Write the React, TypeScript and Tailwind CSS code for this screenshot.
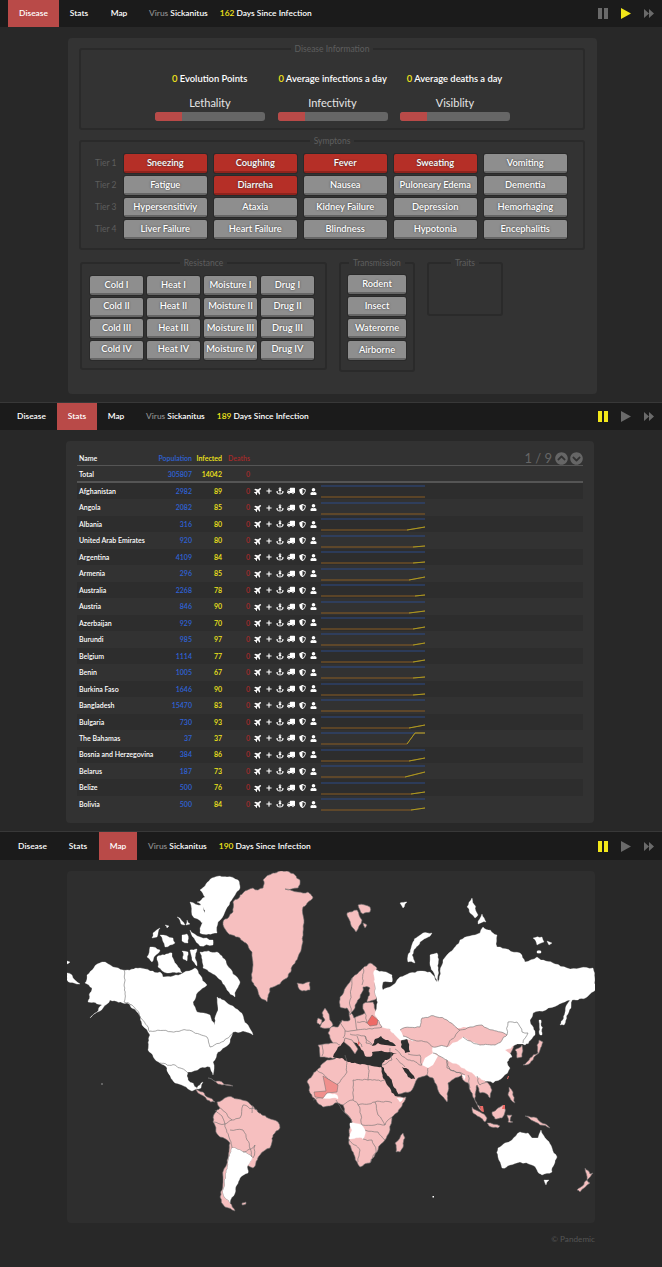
import React from "react";
import { FaPlane, FaPlus, FaAnchor, FaTruck, FaShieldAlt, FaUser, FaChevronCircleUp, FaChevronCircleDown } from "react-icons/fa";

const font = { fontFamily: 'Lato,"Open Sans",sans-serif' };

function Controls({ active }: { active: "pause" | "play" }) {
  const pc = active === "pause" ? "#f2e71a" : "#6a6a6a";
  const py = active === "play" ? "#f2e71a" : "#6a6a6a";
  return (
    <div className="flex items-center gap-[13px] pr-[8px]">
      <svg width="10" height="11" viewBox="0 0 10 11"><rect x="0" width="4" height="11" fill={pc} /><rect x="6" width="4" height="11" fill={pc} /></svg>
      <svg width="10" height="11" viewBox="0 0 10 11"><path d="M0 0L10 5.5L0 11Z" fill={py} /></svg>
      <svg width="10" height="9" viewBox="0 0 10 9"><path d="M0 0L5 4.5L0 9ZM5 0L10 4.5L5 9Z" fill="#6a6a6a" /></svg>
    </div>
  );
}

function Nav({ tab, days, active, h, tabs, gap }: { tab: string; days: number; active: "pause" | "play"; h: string; tabs: { name: string; cls: string }[]; gap: string }) {
  return (
    <div className={`flex items-center bg-[#1b1b1b] text-[8.4px] font-semibold text-white ${h}`}>
      {tabs.map((t) => (
        <div key={t.name} className={`flex h-full items-center justify-center ${t.cls} ${t.name === tab ? "bg-[#b94a48]" : ""}`}>{t.name}</div>
      ))}
      <div className={gap}><span className="text-[#8a8a8a]">Virus</span> Sickanitus</div>
      <div className="ml-[12px]"><span className="text-[#f2e71a]">{days}</span> Days Since Infection</div>
      <div className="ml-auto"><Controls active={active} /></div>
    </div>
  );
}

function Btn({ children, red }: { children: React.ReactNode; red?: boolean }) {
  return (
    <div
      className={`flex h-[19px] items-center justify-center whitespace-nowrap rounded-[2px] text-[9.3px] font-semibold text-white [text-shadow:0_0_2px_#333] shadow-[0_0_0_1px_#2a2a2a] border-b-2 ${
        red ? "bg-[#b52f27] border-b-[#8f231d]" : "bg-[#8e8e8e] border-b-[#666666]"
      }`}
    >
      {children}
    </div>
  );
}

function Field({ title, cls, children }: { title: string; cls: string; children?: React.ReactNode }) {
  return (
    <fieldset className={`rounded-[3px] border-2 border-[#2a2a2a] ${cls}`}>
      <legend className="mx-auto px-[4px] text-[8.5px] leading-[10px] text-[#5e5e5e]">{title}</legend>
      {children}
    </fieldset>
  );
}

const symptoms = [
  ["Tier 1", ["Sneezing", 1], ["Coughing", 1], ["Fever", 1], ["Sweating", 1], ["Vomiting", 0]],
  ["Tier 2", ["Fatigue", 0], ["Diarreha", 1], ["Nausea", 0], ["Puloneary Edema", 0], ["Dementia", 0]],
  ["Tier 3", ["Hypersensitiviy", 0], ["Ataxia", 0], ["Kidney Failure", 0], ["Depression", 0], ["Hemorhaging", 0]],
  ["Tier 4", ["Liver Failure", 0], ["Heart Failure", 0], ["Blindness", 0], ["Hypotonia", 0], ["Encephalitis", 0]],
] as const;

const resist = ["I", "II", "III", "IV"].flatMap((n) => ["Cold", "Heat", "Moisture", "Drug"].map((k) => `${k} ${n}`));

function Bar({ label }: { label: string }) {
  return (
    <div className="flex w-[110px] flex-col items-center">
      <div className="text-[11px] leading-[14px] text-[#e6e6e6]">{label}</div>
      <div className="mt-[2px] h-[9px] w-full overflow-hidden rounded-[3px] bg-[#666666]">
        <div className="h-full w-[27px] bg-[#b94a48]" />
      </div>
    </div>
  );
}

function Disease() {
  return (
    <section className="h-[403px] border-b border-[#383838]">
      <Nav tab="Disease" days={162} active="play" h="h-[27px]" gap="ml-[15px]" tabs={[
        { name: "Disease", cls: "ml-[8px] w-[51px]" },
        { name: "Stats", cls: "ml-[4px] w-[32px]" },
        { name: "Map", cls: "ml-[9px] w-[30px]" },
      ]} />
      <div className="ml-[68px] mt-[11px] h-[356px] w-[529px] rounded-[4px] bg-[#333333] pl-[11px] pr-[12px] pt-[6px]">
        <Field title="Disease Information" cls="h-[86px]">
          <div className="relative mt-[18px] flex h-[14px] text-[9.4px] font-semibold leading-[14px] text-white">
            <div className="ml-[91px]"><span className="text-[#f2e71a]">0</span> Evolution Points</div>
            <div className="ml-[31px]"><span className="text-[#f2e71a]">0</span> Average infections a day</div>
            <div className="ml-[20px]"><span className="text-[#f2e71a]">0</span> Average deaths a day</div>
          </div>
          <div className="ml-[74px] mt-[10px] flex gap-[12.5px]">
            <Bar label="Lethality" /><Bar label="Infectivity" /><Bar label="Visiblity" />
          </div>
        </Field>
        <Field title="Symptons" cls="mt-[6px] h-[114px]">
          <div className="grid grid-cols-[35.5px_repeat(5,82.5px)] gap-x-[7.5px] gap-y-[3px] pt-[8px]">
            {symptoms.map((row) => (
              <React.Fragment key={row[0]}>
                <div className="flex items-center justify-end text-[8.5px] text-[#5e5e5e]">{row[0]}</div>
                {row.slice(1).map((c: any) => <Btn key={c[0]} red={!!c[1]}>{c[0]}</Btn>)}
              </React.Fragment>
            ))}
          </div>
        </Field>
        <div className="ml-[1px] mt-[8px] flex items-start gap-[12px]">
          <Field title="Resistance" cls="h-[112px] w-[247px]">
            <div className="grid grid-cols-[repeat(4,53px)] gap-x-[4px] gap-y-[2.5px] pl-[8px] pt-[8px]">
              {resist.map((r) => <Btn key={r}>{r}</Btn>)}
            </div>
          </Field>
          <Field title="Transmission" cls="h-[114px] w-[76px]">
            <div className="flex flex-col gap-[3px] pl-[7px] pr-[7px] pt-[7px]">
              {["Rodent", "Insect", "Waterorne", "Airborne"].map((r) => <Btn key={r}>{r}</Btn>)}
            </div>
          </Field>
          <Field title="Traits" cls="h-[58px] w-[76px]" />
        </div>
      </div>
    </section>
  );
}

const rows: [string, number, number, number, number][] = [
  ["Afghanistan", 2982, 89, 0, 0], ["Angola", 2082, 85, 0, 0], ["Albania", 316, 80, 86, 3],
  ["United Arab Emirates", 920, 80, 92, 1], ["Argentina", 4109, 84, 92, 1], ["Armenia", 296, 85, 88, 3],
  ["Australia", 2268, 78, 94, 1], ["Austria", 846, 90, 88, 2], ["Azerbaijan", 929, 70, 92, 2],
  ["Burundi", 985, 97, 92, 2], ["Belgium", 1114, 77, 92, 2], ["Benin", 1005, 67, 92, 1],
  ["Burkina Faso", 1646, 90, 92, 1], ["Bangladesh", 15470, 83, 0, 0], ["Bulgaria", 730, 93, 88, 3],
  ["The Bahamas", 37, 37, 84, 11], ["Bosnia and Herzegovina", 384, 86, 88, 3], ["Belarus", 187, 73, 84, 5],
  ["Belize", 500, 76, 90, 2], ["Bolivia", 500, 84, 90, 2],
];

function Spark({ s, r }: { s: number; r: number }) {
  const y = 14 - r;
  const pts = r === 0 ? "0,14 104,14" : r === 11 ? "0,14 86,14 94,3 104,3" : `0,14 ${s},14 104,${y}`;
  return (
    <svg width="104" height="16" viewBox="0 0 104 16" className="block">
      <line x1="0" y1="3" x2="104" y2="3" stroke="#2c4a86" strokeWidth="1" />
      <polyline points={pts} fill="none" stroke="#8a5d22" strokeWidth="1" />
      {r > 0 && <polyline points={r === 11 ? "86,14 94,3 104,3" : `${s},14 104,${y}`} fill="none" stroke="#a89a22" strokeWidth="1" />}
    </svg>
  );
}

const gridCls = "grid grid-cols-[81px_34px_30px_28px_71px_1fr] items-center text-[7px] font-semibold";

function Stats() {
  return (
    <section className="h-[429px] border-b border-[#383838]">
      <Nav tab="Stats" days={189} active="pause" h="h-[27px]" gap="ml-[22px]" tabs={[
        { name: "Disease", cls: "ml-[17px] w-[29px]" },
        { name: "Stats", cls: "ml-[11px] w-[40px]" },
        { name: "Map", cls: "ml-[11px] w-[16px]" },
      ]} />
      <div className="ml-[66px] mt-[11px] h-[382px] w-[528px] rounded-[4px] bg-[#323232] pl-[11px] pr-[11px] pt-[9px]">
        <div className={`${gridCls} h-[16px] border-b border-[#555555] pt-[2px]`}>
          <div className="pl-[2px] text-white">Name</div>
          <div className="whitespace-nowrap text-right text-[#2f62d6]">Population</div>
          <div className="text-right text-[#f2e71a]">Infected</div>
          <div className="text-right text-[#a52a2a]">Deaths</div>
          <div />
          <div className="flex items-center justify-end gap-[2px] text-[13px] font-normal leading-none text-[#666666]">
            <span className="mr-[1px]">1 / 9</span>
            <FaChevronCircleUp size={13} />
            <FaChevronCircleDown size={13} />
          </div>
        </div>
        <div className={`${gridCls} h-[17px] border-b-2 border-[#555555] pt-[2px]`}>
          <div className="pl-[2px] text-white">Total</div>
          <div className="text-right text-[#2f62d6]">305807</div>
          <div className="text-right text-[#f2e71a]">14042</div>
          <div className="text-right text-[#a52a2a]">0</div>
        </div>
        {rows.map((r, i) => (
          <div key={r[0]} className={`${gridCls} h-[16.47px] ${i % 2 === 0 ? "bg-[#2d2d2d]" : ""}`}>
            <div className="whitespace-nowrap pl-[2px] text-white">{r[0]}</div>
            <div className="text-right text-[#2f62d6]">{r[1]}</div>
            <div className="text-right text-[#f2e71a]">{r[2]}</div>
            <div className="text-right text-[#a52a2a]">0</div>
            <div className="flex items-center justify-between pl-[4px] pr-[4px] text-white">
              <FaPlane size={8} className="-rotate-45" />
              <FaPlus size={6} />
              <FaAnchor size={8} />
              <FaTruck size={8} className="-scale-x-100" />
              <FaShieldAlt size={7} />
              <FaUser size={7} />
            </div>
            <Spark s={r[3]} r={r[4]} />
          </div>
        ))}
      </div>
    </section>
  );
}

const PINK = "#f6bfbf";
const LINE = "#6e6e6e";
const SEA = "#2e2e2e";

type P = [number, number];
const parse = (s: string): P[] => s.split(" ").map((t) => t.split(",").map(Number) as P);
const hash = (x: number, y: number) => {
  const v = Math.sin(x * 12.9898 + y * 78.233) * 43758.5453;
  return v - Math.floor(v) - 0.5;
};
function split(a: P, b: P, out: P[]) {
  const dx = b[0] - a[0];
  const dy = b[1] - a[1];
  const len = Math.hypot(dx, dy);
  if (len < 3.5) return;
  const mx = (a[0] + b[0]) / 2;
  const my = (a[1] + b[1]) / 2;
  const flip = dx > 0 || (dx === 0 && dy > 0) ? 1 : -1;
  const d = hash(mx, my) * Math.min(len * 0.3, 2.4);
  const m: P = [mx + (-dy / len) * d * flip, my + (dx / len) * d * flip];
  split(a, m, out);
  out.push(m);
  split(m, b, out);
}
function rough(s: string, closed = true) {
  const pts = parse(s);
  const out: P[] = [];
  pts.forEach((p, i) => {
    out.push(p);
    const n = pts[i + 1] ?? (closed ? pts[0] : null);
    if (n) split(p, n, out);
  });
  return out.map((p) => `${p[0].toFixed(1)},${p[1].toFixed(1)}`).join(" ");
}

const pinkShapes = [
  "318,1045 324,1044 333,1043 330,1038 328,1033 330,1028 338,1027 342,1020 346,1021 350,1020 349,1012 354,1018 365,1013 363,1004 373,1002 377,1013 385,1027 390,1029 396,1035 400,1030 520,1030 505,1065 493,1078 483,1078 488,1083 492,1090 490,1098 485,1093 480,1093 477,1085 475,1100 483,1112 477,1104 470,1090 468,1083 463,1080 462,1075 455,1078 448,1083 447,1094 447,1102 442,1096 437,1086 433,1078 427,1075 418,1078 412,1090 403,1093 395,1095 406,1097 402,1106 398,1112 392,1117 390,1130 387,1136 385,1140 381,1144 378,1150 374,1157 370,1163 360,1167 357,1162 355,1157 351,1148 349,1140 349,1130 352,1122 345,1113 343,1105 335,1103 330,1106 323,1107 316,1100 310,1093 307,1082 312,1076 317,1070 322,1064 327,1060 337,1057 320,1057",
  "370,963 377,968 375,985 377,998 367,1002 370,988 363,987 360,998 355,1008 350,1015 347,1008 340,1007 340,997 346,987 352,978 363,968",
  "325,1008 329,1014 333,1025 330,1028 320,1027 325,1020 322,1013",
  "318,1018 322,1020 320,1025 317,1023",
  "297,983 303,984 310,982 310,987 310,990 302,991 298,987",
  "347,913 357,910 362,920 356,932 352,927",
  "358,905 365,905 370,907 370,912 363,914",
  "363,923 367,925 365,928",
  "273,873 280,871 287,871 295,875 300,880 298,888 285,889 298,892 308,892 313,897 303,907 304,920 303,932 302,945 298,957 293,965 287,978 280,984 270,988 267,1002 260,997 254,985 252,978 253,965 252,952 246,943 240,938 232,935 227,932 223,922 233,912 233,902 243,893 253,888 258,890 263,888 263,880",
  "472,1107 480,1112 487,1118 485,1122 473,1113",
  "487,1123 500,1126 498,1128 489,1126",
  "492,1112 498,1108 503,1105 505,1112 502,1118 495,1119",
  "507,1115 512,1115 510,1121 513,1122 508,1122",
  "509,1087 513,1092 515,1103 511,1100 508,1095",
  "525,1116 537,1118 550,1128 540,1125 531,1120",
  "523,1065 530,1058 538,1053 537,1045 539,1040 543,1042 540,1050 533,1060 526,1065",
  "515,1050 522,1045 522,1057 517,1058",
  "403,1133 405,1138 400,1152 396,1152 395,1143",
  "593,1173 587,1180 585,1168 590,1174",
  "587,1180 577,1190 580,1192 590,1183",
  "195,1088 203,1092 215,1102 207,1100 198,1093",
  "208,1078 223,1083 233,1086 222,1085",
  "217,1102 227,1097 242,1100 250,1104 257,1110 268,1118 278,1122 280,1128 273,1135 272,1142 270,1148 260,1155 253,1168 247,1165 252,1157 243,1152 232,1148 228,1163 223,1193 230,1203 235,1211 225,1207 220,1197 223,1177 230,1143 220,1137 213,1122 215,1113 220,1108",
  "242,1203 246,1202 246,1204 242,1205",
];

const whiteShapes = [
  "87,975 102,962 113,967 123,970 140,968 150,971 160,972 163,977 183,973 195,968 200,975 207,985 198,992 193,1002 197,1012 210,1015 215,1025 218,1008 217,997 230,1005 240,1012 248,1025 253,1035 243,1031 233,1032 230,1042 218,1052 213,1062 213,1075 210,1067 200,1068 188,1072 188,1080 197,1088 203,1082 201,1088 192,1091 175,1083 167,1068 160,1063 148,1050 150,1035 142,1025 137,1012 127,1003 110,1000 103,1008 90,1018 102,1005 88,1002 92,988 85,983",
  "212,878 220,876 227,877 238,880 240,888 230,902 218,922 217,933 200,933 205,915 203,907 197,902 205,897 200,890",
  "190,902 202,905 207,920 202,923 192,915",
  "153,933 160,928 157,937 152,938",
  "160,935 173,938 175,943 165,947",
  "182,935 187,934 188,943 182,941",
  "190,930 200,937 213,940 213,945 200,946 194,938",
  "177,917 185,925 181,924",
  "187,920 190,924 186,925",
  "165,925 169,926 167,928",
  "157,957 172,953 177,965 182,973 167,973 158,967",
  "150,947 160,950 152,962 147,957",
  "182,951 188,952 187,961 183,959",
  "190,950 197,949 195,958 197,966 192,960",
  "200,952 217,952 227,965 240,982 235,997 227,990 218,978 203,968",
  "67,973 72,975 80,984 74,983 67,980",
  "67,961 70,962 67,964",
  "232,1148 243,1152 252,1157 248,1165 248,1173 240,1178 235,1193 230,1203 223,1193 228,1163",
  "375,970 392,975 392,982 383,982 383,990 390,987 400,977 420,971 430,972 437,982 430,965 430,955 437,953 438,970 438,982 443,960 450,952 460,940 470,936 480,933 483,927 497,935 497,947 520,953 525,962 537,957 555,964 567,968 580,968 593,968 596,988 587,997 572,1000 558,1005 533,1013 530,1020 535,1035 525,1045 515,1045 505,1050 512,1057 507,1062 510,1068 503,1077 493,1083 483,1080 470,1072 447,1060 433,1053 433,1040 400,1040 395,1035 390,1029 382,1027 375,1015 377,998 375,985",
  "572,997 560,1025 564,1025 571,1008",
  "539,1020 541,1020 542,1035 540,1035",
  "432,933 423,933 413,942 408,955 408,962 415,963 412,955 420,942",
  "472,898 478,915 475,918 467,907",
  "482,914 486,922 478,924",
  "400,903 407,902 403,908",
  "533,938 542,937 544,942 537,945",
  "547,941 552,943 549,945",
  "537,951 541,951 541,953 537,953",
  "350,1123 362,1125 365,1130 363,1139 349,1139 352,1130",
  "323,1098 328,1092 337,1095 338,1099 332,1098",
  "397,1098 403,1098 400,1102",
  "462,1075 465,1075 464,1080",
  "498,1148 505,1143 512,1140 520,1132 528,1133 532,1138 538,1138 541,1130 547,1140 552,1148 557,1157 552,1172 542,1175 532,1165 520,1162 510,1165 502,1168 498,1157",
  "544,1180 549,1180 546,1185",
];

const pinkOnSea = ["345,1038 352,1040 358,1049 355,1054 350,1047 344,1042"];

const seas = [
  "333,1057 338,1047 345,1039 352,1041 360,1047 365,1056 372,1056 372,1052 397,1053 385,1060 382,1067 372,1066 362,1064 348,1062 342,1058",
  "372,1046 375,1039 381,1036 388,1040 396,1046 385,1045 378,1043",
  "402,1037 408,1037 408,1042 410,1052 405,1053 401,1047",
  "381,1066 384,1068 400,1096 395,1096 385,1080",
  "402,1067 406,1068 414,1076 415,1079 408,1077",
];

const borders = [
  "124,970 124,1002",
  "124,1002 132,1005 140,1017 150,1032",
  "150,1031 192,1031",
  "192,1031 207,1037 210,1047 228,1038 233,1033",
  "160,1063 175,1065 188,1073",
  "322,1045 322,1056",
  "333,1043 340,1045",
  "340,1021 345,1030 343,1038",
  "355,1018 357,1030 345,1031",
  "357,1030 372,1029 382,1027",
  "365,1013 367,1023 357,1022",
  "378,1020 382,1027",
  "350,1034 365,1036 372,1044",
  "357,1036 362,1047",
  "365,1036 366,1043 372,1045",
  "352,978 350,1000 351,1012",
  "363,968 362,985",
  "400,1030 420,1027 422,1018 437,1017 447,1020 457,1028 460,1030 457,1033 447,1047 433,1047 427,1042 413,1040 403,1036",
  "460,1030 470,1027 482,1025 493,1030 507,1035 495,1045 480,1045 473,1043 463,1037",
  "507,1035 508,1022 517,1022 522,1032 528,1033 523,1043",
  "390,1048 392,1060 382,1065",
  "395,1049 408,1060 422,1065",
  "396,1058 405,1067",
  "433,1053 447,1060 447,1068 462,1075",
  "428,1068 427,1075",
  "447,1060 450,1070 465,1075",
  "468,1075 470,1088",
  "477,1076 480,1085 488,1082",
  "408,1054 420,1055 422,1065",
  "345,1055 347,1072 336,1085",
  "317,1070 330,1080 336,1085 338,1085",
  "368,1065 368,1080 385,1080",
  "353,1080 368,1080",
  "353,1080 353,1100 358,1105 375,1102 392,1103",
  "336,1100 345,1113 352,1122",
  "343,1105 353,1100",
  "358,1105 362,1125 375,1125 385,1125 392,1117",
  "375,1102 378,1115 385,1125",
  "365,1130 378,1132 385,1140",
  "363,1139 372,1140 376,1150 370,1163",
  "349,1139 360,1150 358,1162",
  "323,1098 313,1100",
  "220,1108 232,1120 240,1118 243,1105",
  "243,1105 257,1110",
  "252,1105 252,1113",
  "213,1122 225,1124 232,1120",
  "225,1124 230,1140 232,1148",
  "230,1130 243,1130 247,1140 252,1157",
  "243,1152 255,1145 253,1158",
  "215,1110 222,1116 225,1124",
];

function WorldMap() {
  return (
    <svg viewBox="67 871 528 352" className="block h-full w-full">
      {pinkShapes.map((p, i) => <polygon key={i} points={rough(p)} fill={PINK} stroke={LINE} strokeWidth="0.6" strokeLinejoin="round" />)}
      {seas.map((p, i) => <polygon key={i} points={rough(p)} fill={SEA} />)}
      {pinkOnSea.map((p, i) => <polygon key={i} points={p} fill={PINK} stroke={LINE} strokeWidth="0.6" />)}
      {whiteShapes.map((p, i) => <polygon key={i} points={rough(p)} fill="#ffffff" stroke="#ffffff" strokeWidth="0.3" strokeLinejoin="round" />)}
      <polygon points={rough("400,1030 420,1027 422,1018 437,1017 447,1020 457,1028 470,1027 482,1025 493,1030 507,1035 495,1045 480,1045 463,1037 447,1047 433,1047 427,1042 413,1040 403,1036")} fill={PINK} />
      <polygon points="422,1065 425,1058 433,1053 438,1056 433,1065 428,1068" fill="#ffffff" />
      {borders.map((p, i) => <polyline key={i} points={rough(p, false)} fill="none" stroke={LINE} strokeWidth="0.6" strokeLinejoin="round" />)}
      <polyline points="163,1066 170,1078" stroke={SEA} strokeWidth="1.4" fill="none" />
      <polygon points="367,1023 372,1015 378,1020 377,1025 370,1026" fill="#ee6a66" stroke={LINE} strokeWidth="0.5" />
      <polygon points="323,1076 338,1085 337,1092 327,1093 323,1098 315,1097 314,1092 326,1091" fill="#f08f8c" stroke={LINE} strokeWidth="0.5" />
      <polygon points="503,1105 505,1105 505,1109 502,1109" fill="#ee6a66" />
      <polygon points="480,1106 483,1106 484,1112 481,1111" fill="#ee6a66" />
      <polygon points="508,1076 509,1076 508,1079 507,1079" fill="#ee6a66" />
      <polygon points="358,1041 360,1043 358,1046" fill="#ee6a66" />
      <rect x="101.5" y="1083.5" width="1" height="1" fill="#fff" />
      <rect x="432.5" y="1196" width="1.5" height="1.5" fill="#fff" />
    </svg>
  );
}

function MapView() {
  return (
    <section className="h-[435px]">
      <Nav tab="Map" days={190} active="pause" h="h-[28px]" gap="ml-[11px]" tabs={[
        { name: "Disease", cls: "ml-[18px] w-[29px]" },
        { name: "Stats", cls: "ml-[22px] w-[18px]" },
        { name: "Map", cls: "ml-[12px] w-[38px]" },
      ]} />
      <div className="ml-[67px] mt-[11px] h-[352px] w-[528px] overflow-hidden rounded-[4px] bg-[#2e2e2e]">
        <WorldMap />
      </div>
      <div className="mr-[67px] mt-[10px] text-right text-[8.2px] leading-[12px] text-[#555555]">© Pandemic</div>
    </section>
  );
}

export default function App() {
  return (
    <div className="h-[1267px] w-[662px] overflow-hidden bg-[#282828]" style={font}>
      <Disease />
      <Stats />
      <MapView />
    </div>
  );
}
